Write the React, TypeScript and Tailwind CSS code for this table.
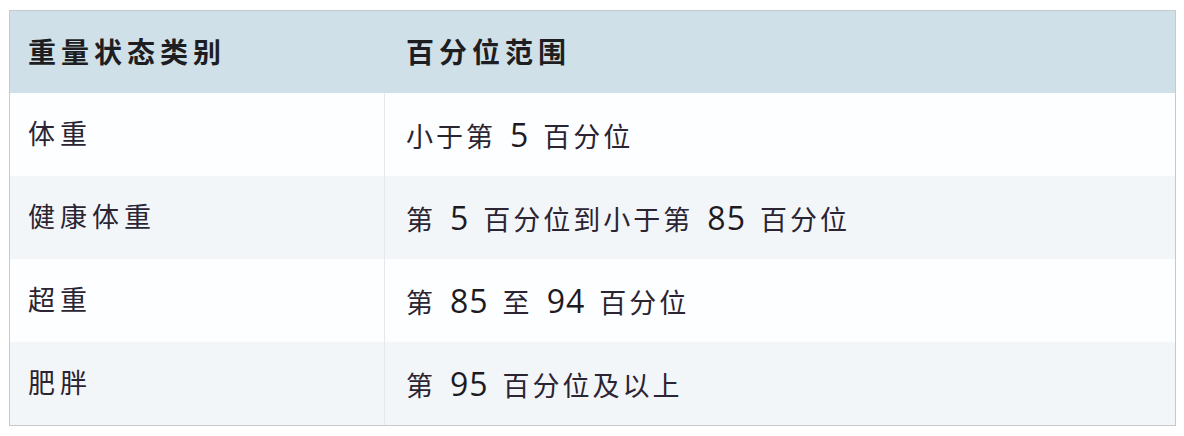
const ROWS = [
  { category: '体重', range: ['小于第 ', '5', ' 百分位'] },
  { category: '健康体重', range: ['第 ', '5', ' 百分位到小于第 ', '85', ' 百分位'] },
  { category: '超重', range: ['第 ', '85', ' 至 ', '94', ' 百分位'] },
  { category: '肥胖', range: ['第 ', '95', ' 百分位及以上'] },
];

export default function App() {
  return (
    <div className="w-[1184px] h-[436px] bg-white pt-[10px] pl-[9px]">
      <div className="w-[1167px] border border-[#c8c9cb] font-['Open_Sans','Noto_Sans_CJK_SC',sans-serif]">
        <div className="grid grid-cols-[375px_1fr] h-[82px] bg-[#d0e0e9] items-center text-[28px] font-bold text-[#1e1e22] tracking-[5px]">
          <div className="pl-[18px]">重量状态类别</div>
          <div className="pl-[21px]">百分位范围</div>
        </div>
        {ROWS.map((row, i) => (
          <div
            key={row.category}
            className={`grid grid-cols-[375px_1fr] h-[83px] items-center text-[27px] text-[#2b2433] tracking-[3px] [word-spacing:4px] ${
              i % 2 === 0 ? 'bg-[#fdfeff]' : 'bg-[#f3f6f9]'
            }`}
          >
            <div className="pl-[18px] h-full flex items-center border-r border-[#e4e7eb] tracking-[5px]">{row.category}</div>
            <div className="pl-[21px]">
              {row.range.map((part, j) =>
                j % 2 === 1 ? (
                  <span key={j} className="text-[32px] text-[#1d1a22] tracking-[1px]">
                    {part}
                  </span>
                ) : (
                  <span key={j}>{part}</span>
                )
              )}
            </div>
          </div>
        ))}
      </div>
    </div>
  );
}
